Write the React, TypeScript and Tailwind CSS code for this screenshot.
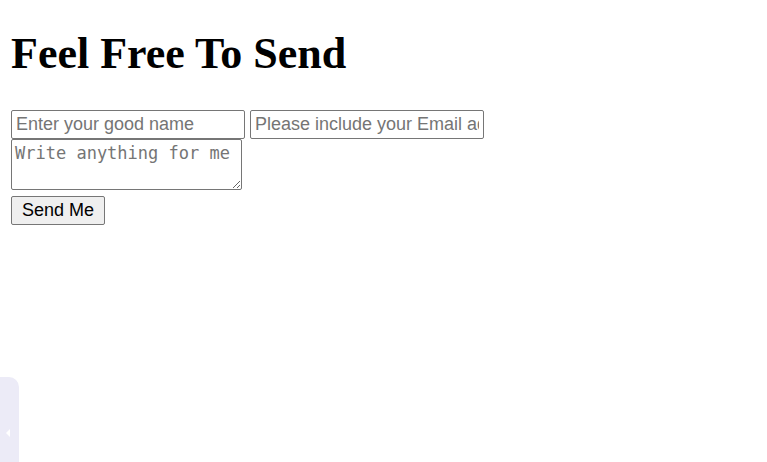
import React from 'react';

const App: React.FC = () => {
  return (
    <div className="relative min-h-[462px] bg-white">
      <div className="flex flex-col items-start px-[11px] pt-[28px]">
        <h1 className="font-['Liberation_Serif',serif] text-[44px] font-bold leading-[52px] text-black">
          Feel Free To Send
        </h1>

        <form className="mt-[30px] flex flex-col items-start" onSubmit={(e) => e.preventDefault()}>
          <div className="flex gap-[5px]">
            <input
              type="text"
              placeholder="Enter your good name"
              className="h-[29px] w-[234px] rounded-[2px] border border-[#767676] px-[4px] font-['Liberation_Sans',Arial,sans-serif] text-[18px] text-black outline-none placeholder:text-[#757575]"
            />
            <input
              type="email"
              placeholder="Please include your Email address"
              className="h-[29px] w-[234px] rounded-[2px] border border-[#767676] px-[4px] font-['Liberation_Sans',Arial,sans-serif] text-[18px] text-black outline-none placeholder:text-[#757575]"
            />
          </div>
          <textarea
            placeholder="Write anything for me"
            className="h-[51px] w-[231px] rounded-[2px] border border-[#767676] px-[3px] pt-[2px] font-['DejaVu_Sans_Mono',monospace] text-[17px] leading-[22px] text-black outline-none placeholder:text-[#757575]"
          />
          <button
            type="submit"
            className="mt-[6px] h-[29px] w-[94px] rounded-[2px] border border-[#767676] bg-[#efefef] font-['Liberation_Sans',Arial,sans-serif] text-[18px] text-black"
          >
            Send Me
          </button>
        </form>
      </div>

      {/* side tab */}
      <div className="fixed bottom-0 left-0 flex h-[85px] w-[19px] items-center justify-center rounded-tr-[10px] bg-[#ecebf7]">
        <svg width="6" height="10" viewBox="0 0 6 10" className="mt-[27px] mr-[3px]">
          <path d="M5 1 L1 5 L5 9 Z" fill="#ffffff" />
        </svg>
      </div>
    </div>
  );
};

export default App;
